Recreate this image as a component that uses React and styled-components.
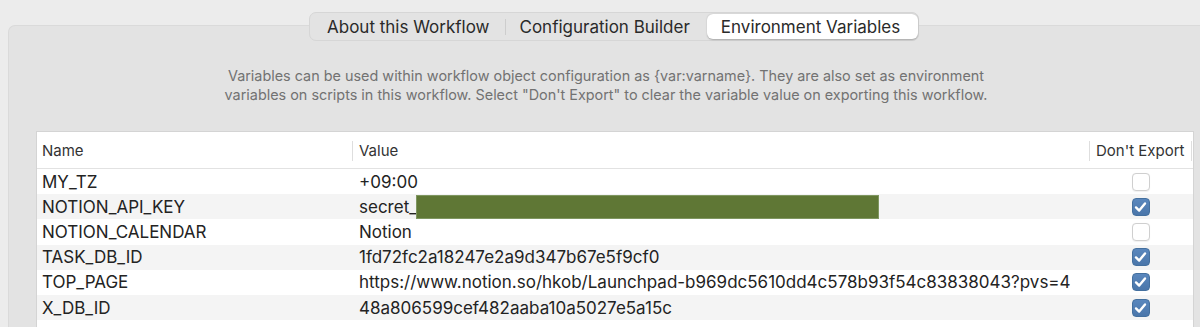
import React from "react";
import styled, { createGlobalStyle } from "styled-components";

const Global = createGlobalStyle`
  html, body { margin: 0; padding: 0; background: #ececec; overflow: hidden; }
  body { font-family: Inter, "Noto Sans", "Liberation Sans", sans-serif; color: #262626; }
`;

const Window = styled.div`
  width: 1200px;
  height: 327px;
  padding-top: 12px;
  box-sizing: border-box;
  overflow: hidden;
`;

const TabRow = styled.div`
  display: flex;
  padding-left: 309px;
  position: relative;
  z-index: 1;
`;

const TabBar = styled.div`
  display: flex;
  align-items: center;
  height: 29px;
  box-sizing: border-box;
  padding: 0 0 0 1px;
  background: #e3e3e3;
  border: 1px solid #d6d6d6;
  border-radius: 7px;
`;

const Tab = styled.div`
  height: 25px;
  display: flex;
  align-items: center;
  padding: 0 ${(p) => p.$r}px 0 ${(p) => p.$l}px;
  font-size: 17px;
  color: #2a2a2a;
  border-radius: 6px;
  background: ${(p) => (p.$active ? "#ffffff" : "transparent")};
  box-shadow: ${(p) => (p.$active ? "0 0.5px 1.5px rgba(0,0,0,0.25)" : "none")};
  white-space: nowrap;
`;

const TabSep = styled.div`
  width: 1px;
  height: 16px;
  background: #cdcdcd;
`;

const Panel = styled.div`
  margin: -16px 0 0 8px;
  padding: 40px 0 0 27px;
  background: #e3e3e3;
  border: 1px solid #dadada;
  border-right: none;
  border-bottom: none;
  border-radius: 7px 0 0 0;
  height: 303px;
  box-sizing: border-box;
  display: flex;
  flex-direction: column;
`;

const Description = styled.p`
  margin: 0 0 27px 0;
  width: 1140px;
  text-align: center;
  font-size: 14.4px;
  line-height: 19px;
  color: #727272;
  white-space: nowrap;
`;

const Table = styled.div`
  width: 1158px;
  flex: 1;
  background: #ffffff;
  border: 1px solid #d4d4d4;
  border-bottom: none;
  box-sizing: border-box;
`;

const columns = "316px 737px 102px";

const HeaderRow = styled.div`
  display: grid;
  grid-template-columns: ${columns};
  height: 37px;
  align-items: center;
  border-bottom: 1px solid #e2e2e2;
  box-sizing: border-box;
`;

const HeaderCell = styled.div`
  position: relative;
  height: 100%;
  display: flex;
  align-items: center;
  padding-left: ${(p) => p.$pad}px;
  padding-top: 1px;
  box-sizing: border-box;
  font-size: 15px;
  color: #333;
  &::after {
    content: "";
    position: absolute;
    right: 0;
    top: 9px;
    bottom: 7px;
    width: 1px;
    background: #dedede;
  }
`;

const Row = styled.div`
  display: grid;
  grid-template-columns: ${columns};
  height: 25.2px;
  align-items: center;
  background: ${(p) => (p.$striped ? "#f4f4f4" : "#ffffff")};
  font-size: 17px;
  color: #232323;
`;

const Cell = styled.div`
  padding-left: ${(p) => p.$pad}px;
  white-space: nowrap;
  overflow: hidden;
  display: flex;
  align-items: center;
  height: 100%;
`;

const CheckCell = styled.div`
  display: flex;
  justify-content: center;
  align-items: center;
  height: 100%;
  padding-right: 1px;
`;

const Redacted = styled.span`
  display: inline-block;
  width: 463px;
  height: 24px;
  background: #5f7735;
  border: 1px solid #7f9660;
  box-sizing: border-box;
  margin-left: -1px;
`;

const Box = styled.div`
  width: 18px;
  height: 18px;
  box-sizing: border-box;
  border-radius: 4px;
  display: flex;
  align-items: center;
  justify-content: center;
  background: ${(p) => (p.$on ? "linear-gradient(#5a87bd, #4a76aa)" : "#ffffff")};
  border: 1px solid ${(p) => (p.$on ? "#44709f" : "#cfcfcf")};
  box-shadow: ${(p) => (p.$on ? "none" : "0 0.5px 1px rgba(0,0,0,0.06)")};
`;

const Checkbox = ({ on }) => (
  <Box $on={on}>
    {on && (
      <svg width="13" height="12" viewBox="0 0 13 12">
        <path d="M2 6.4 L5.2 9.6 L11 2.4" fill="none" stroke="#fff" strokeWidth="2.4" strokeLinecap="round" strokeLinejoin="round" />
      </svg>
    )}
  </Box>
);

const rows = [
  { name: "MY_TZ", value: "+09:00", on: false },
  { name: "NOTION_API_KEY", value: "secret_", redacted: true, on: true },
  { name: "NOTION_CALENDAR", value: "Notion", on: false },
  { name: "TASK_DB_ID", value: "1fd72fc2a18247e2a9d347b67e5f9cf0", on: true },
  { name: "TOP_PAGE", value: "https://www.notion.so/hkob/Launchpad-b969dc5610dd4c578b93f54c83838043?pvs=4", on: true },
  { name: "X_DB_ID", value: "48a806599cef482aaba10a5027e5a15c", on: true },
];

export default function App() {
  return (
    <>
      <Global />
      <Window>
        <TabRow>
          <TabBar>
            <Tab $l={16} $r={15}>About this Workflow</Tab>
            <TabSep />
            <Tab $l={14} $r={17}>Configuration Builder</Tab>
            <Tab $active $l={14} $r={18}>Environment Variables</Tab>
          </TabBar>
        </TabRow>
        <Panel>
          <Description>
            Variables can be used within workflow object configuration as {"{var:varname}"}. They are also set as environment
            <br />
            variables on scripts in this workflow. Select "Don't Export" to clear the variable value on exporting this workflow.
          </Description>
          <Table>
            <HeaderRow>
              <HeaderCell $pad={5}>Name</HeaderCell>
              <HeaderCell $pad={6}>Value</HeaderCell>
              <HeaderCell $pad={6}>Don't Export</HeaderCell>
            </HeaderRow>
            {rows.map((r, i) => (
              <Row key={r.name} $striped={i % 2 === 1}>
                <Cell $pad={5}>{r.name}</Cell>
                <Cell $pad={6}>
                  {r.value}
                  {r.redacted && <Redacted />}
                </Cell>
                <CheckCell>
                  <Checkbox on={r.on} />
                </CheckCell>
              </Row>
            ))}
          </Table>
        </Panel>
      </Window>
    </>
  );
}
